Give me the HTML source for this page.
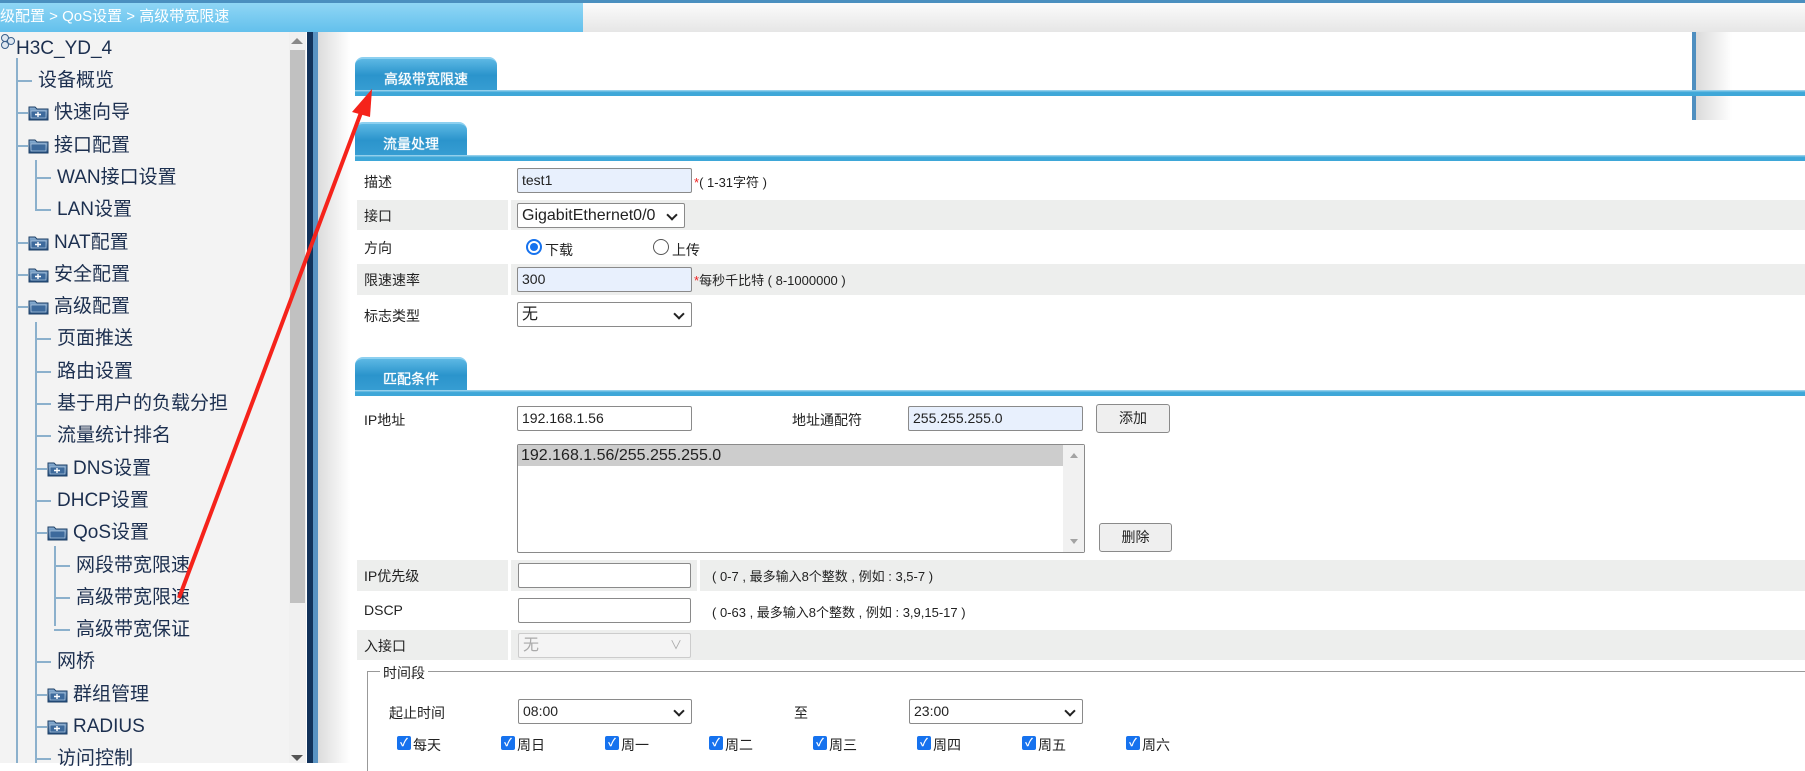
<!DOCTYPE html>
<html><head><meta charset="utf-8"><style>
*{margin:0;padding:0;box-sizing:border-box}
body{width:1805px;height:763px;overflow:hidden;background:#fff;font-family:"Liberation Sans","Noto Sans CJK SC",sans-serif;position:relative;color:#222}
.a{position:absolute}
.topline{left:0;top:0;width:1805px;height:3px;background:#4a8fbf}
.topbar{left:583px;top:3px;width:1222px;height:29px;background:linear-gradient(#fbfbfb,#e6e6e6)}
.crumb{left:0;top:0;width:583px;height:32px;background:linear-gradient(#8fd6f5,#63c0ec);border-top:3px solid #4a8fbf;color:#fff;font-size:15px;line-height:28px;padding-left:0}
.left{left:0;top:32px;width:289px;height:731px;background:#f3f3f3}
.sb{left:289px;top:32px;width:17px;height:731px;background:#f0f0f0}
.thumb{left:290px;top:50px;width:15px;height:553px;background:#c1c1c1}
.tree{font-size:19px;color:#1c2f4f;font-family:"Liberation Sans","Noto Sans CJK SC",sans-serif;white-space:nowrap;line-height:22px}
.vl{background:#8bb0cc;width:2px}
.hl{background:#8bb0cc;height:2px}
.ico{width:20px;height:15px}
.tab{height:38px;background:linear-gradient(#5cb8e4,#2b94cc 45%,#3aa0d4);border-radius:8px 8px 0 0;color:#fff;font-size:14px;text-align:center;line-height:40px;border-top:2px solid #8dd0f0;text-shadow:0 0 1px #fff}
.bl{height:6px;background:linear-gradient(#a9daf0,#3ea7d8 40%,#3ea7d8)}
.lbl{font-size:14px;color:#222}
.g{background:#edeeed}
.inp{height:25px;border:1px solid #8a8a8a;border-radius:2px;background:#fff;font-size:14px;padding-left:4px;line-height:23px;color:#222}
.blue{background:#e8f0fd}
.sel::after{content:"";position:absolute;right:8px;top:7px;width:6px;height:6px;border-right:2px solid #222;border-bottom:2px solid #222;transform:rotate(45deg)}
.btn{height:29px;border:1px solid #8a8a8a;border-radius:3px;background:#efefef;font-size:14px;text-align:center;line-height:27px}
.cb{width:14px;height:14px;background:#1672ee;border-radius:2px;color:#fff;font-size:11px;text-align:center;line-height:14px;font-weight:bold}
.cbt{font-size:14px}
</style></head><body>
<div class="a topline"></div>
<div class="a topbar"></div>
<div class="a crumb">级配置 &gt; QoS设置 &gt; 高级带宽限速</div>
<div class="a left"></div>
<div class="a sb"></div>
<div class="a thumb"></div>
<div class="a" style="left:291px;top:38px;width:0;height:0;border:6px solid transparent;border-bottom:6px solid #888;border-top:0"></div>
<div class="a" style="left:291px;top:755px;width:0;height:0;border:6px solid transparent;border-top:6px solid #555;border-bottom:0"></div>
<div class="a" style="left:307px;top:32px;width:6px;height:731px;background:#12325a"></div>
<div class="a" style="left:313px;top:32px;width:5px;height:731px;background:#5a93c2"></div>
<div class="a" style="left:318px;top:32px;width:32px;height:731px;background:linear-gradient(90deg,#dcdcdc,#fff)"></div>

<div class="tree">
<div class="a" style="left:0;top:34px;width:14px;height:16px"><svg width="16" height="18"><circle cx="5" cy="4" r="3.5" fill="#dfe7f0" stroke="#3a5f8a"/><circle cx="11" cy="7" r="3.5" fill="#dfe7f0" stroke="#3a5f8a"/><circle cx="5" cy="11" r="3.5" fill="#dfe7f0" stroke="#3a5f8a"/></svg></div>
<div class="a" style="left:16px;top:38px">H3C_YD_4</div>
<div class="a vl" style="left:16px;top:58px;height:705px"></div>
<div class="a vl" style="left:35px;top:322px;height:441px"></div>
<div class="a vl" style="left:35px;top:160px;height:50px"></div>
<div class="a vl" style="left:54px;top:546px;height:80px"></div>
</div>
<div id="tr" class="tree"></div>
<script>
var it=[["设备概览",1,0],["快速向导",1,1],["接口配置",1,2],["WAN接口设置",2,0],["LAN设置",2,0],["NAT配置",1,1],["安全配置",1,1],["高级配置",1,2],["页面推送",2,0],["路由设置",2,0],["基于用户的负载分担",2,0],["流量统计排名",2,0],["DNS设置",2,1],["DHCP设置",2,0],["QoS设置",2,2],["网段带宽限速",3,0],["高级带宽限速",3,0],["高级带宽保证",3,0],["网桥",2,0],["群组管理",2,1],["RADIUS",2,1],["访问控制",2,0]];
var fold='<svg width="21" height="16"><defs><linearGradient id="fg" x1="0" y1="0" x2="0" y2="1"><stop offset="0" stop-color="#8fb4d8"/><stop offset="1" stop-color="#1f4a7c"/></linearGradient></defs><path d="M1 2h6l2 2h11v11H1z" fill="url(#fg)" stroke="#1d3f66"/><rect x="3" y="6" width="15" height="7" fill="#3d6a9c" stroke="#c8dcef" stroke-width="0.6"/>PLUS</svg>';
var h="";
for(var i=0;i<it.length;i++){var y=81+i*32.3,t=it[i],vx=[0,16,35,54][t[1]];
 if(t[2]){h+='<div class="a hl" style="left:'+vx+'px;top:'+(y-1)+'px;width:12px"></div>';
  var ix=vx+12;h+='<div class="a ico" style="left:'+ix+'px;top:'+(y-8)+'px">'+fold.replace("PLUS",t[2]==1?'<path d="M7 9.5h6M10 7v5" stroke="#fff" stroke-width="1.4"/>':'')+'</div>';
  h+='<div class="a" style="left:'+(ix+26)+'px;top:'+(y-11)+'px">'+t[0]+'</div>';}
 else{h+='<div class="a hl" style="left:'+vx+'px;top:'+(y-1)+'px;width:16px"></div>';
  h+='<div class="a" style="left:'+(vx+22)+'px;top:'+(y-11)+'px">'+t[0]+'</div>';}
}
document.getElementById("tr").innerHTML=h;
</script>

<div class="a" style="left:1692px;top:32px;width:4px;height:88px;background:#4f8fc0"></div>
<div class="a" style="left:1696px;top:32px;width:36px;height:88px;background:linear-gradient(90deg,#dadada,#fff)"></div>

<div class="a tab" style="left:355px;top:57px;width:142px">高级带宽限速</div>
<div class="a bl" style="left:355px;top:90px;width:1450px"></div>
<div class="a" style="left:1692px;top:96px;width:4px;height:24px;background:#4f8fc0"></div>

<div class="a tab" style="left:355px;top:122px;width:112px">流量处理</div>
<div class="a bl" style="left:355px;top:155px;width:1450px"></div>

<div class="a lbl" style="left:364px;top:172px">描述</div>
<div class="a inp blue" style="left:517px;top:168px;width:175px">test1</div>
<div class="a lbl" style="left:694px;top:172px;font-size:13px"><span style="color:#e22">*</span>( 1-31字符 )</div>

<div class="a g" style="left:357px;top:200px;width:151px;height:30px"></div>
<div class="a g" style="left:511px;top:200px;width:1294px;height:30px"></div>
<div class="a lbl" style="left:364px;top:206px">接口</div>
<div class="a inp sel" style="left:517px;top:203px;width:168px;height:25px;font-size:16px">GigabitEthernet0/0</div>

<div class="a lbl" style="left:364px;top:238px">方向</div>
<div class="a" style="left:526px;top:239px;width:16px;height:16px;border-radius:50%;border:2px solid #1672ee;background:#fff"><div class="a" style="left:2px;top:2px;width:8px;height:8px;border-radius:50%;background:#1672ee"></div></div>
<div class="a lbl" style="left:545px;top:240px">下载</div>
<div class="a" style="left:653px;top:239px;width:16px;height:16px;border-radius:50%;border:1px solid #555;background:#fff"></div>
<div class="a lbl" style="left:672px;top:240px">上传</div>

<div class="a g" style="left:357px;top:264px;width:151px;height:31px"></div>
<div class="a g" style="left:511px;top:264px;width:1294px;height:31px"></div>
<div class="a lbl" style="left:364px;top:270px">限速速率</div>
<div class="a inp blue" style="left:517px;top:267px;width:175px">300</div>
<div class="a lbl" style="left:694px;top:270px;font-size:13px"><span style="color:#e22">*</span>每秒千比特 ( 8-1000000 )</div>

<div class="a lbl" style="left:364px;top:306px">标志类型</div>
<div class="a inp sel" style="left:517px;top:302px;width:175px;font-size:16px">无</div>

<div class="a tab" style="left:355px;top:357px;width:112px">匹配条件</div>
<div class="a bl" style="left:355px;top:390px;width:1450px"></div>

<div class="a lbl" style="left:364px;top:410px">IP地址</div>
<div class="a inp" style="left:517px;top:406px;width:175px">192.168.1.56</div>
<div class="a lbl" style="left:792px;top:410px">地址通配符</div>
<div class="a inp blue" style="left:908px;top:406px;width:175px">255.255.255.0</div>
<div class="a btn" style="left:1096px;top:404px;width:74px">添加</div>

<div class="a" style="left:517px;top:444px;width:568px;height:109px;border:1px solid #8a8a8a;border-radius:2px;background:#fff">
<div class="a" style="left:0;top:0;width:545px;height:21px;background:#cdcdcd;font-size:16px;padding-left:3px;line-height:21px">192.168.1.56/255.255.255.0</div>
<div class="a" style="right:0;top:0;width:21px;height:107px;background:#f1f1f1"></div>
<div class="a" style="right:6px;top:8px;border:4px solid transparent;border-bottom:5px solid #a3a3a3;border-top:0"></div>
<div class="a" style="right:6px;bottom:8px;border:4px solid transparent;border-top:5px solid #a3a3a3;border-bottom:0"></div>
</div>
<div class="a btn" style="left:1099px;top:523px;width:73px">删除</div>

<div class="a g" style="left:357px;top:560px;width:151px;height:31px"></div>
<div class="a g" style="left:511px;top:560px;width:186px;height:31px"></div>
<div class="a g" style="left:700px;top:560px;width:1105px;height:31px"></div>
<div class="a lbl" style="left:364px;top:566px">IP优先级</div>
<div class="a inp" style="left:518px;top:563px;width:173px"></div>
<div class="a lbl" style="left:712px;top:566px;font-size:13px">( 0-7 , 最多输入8个整数 , 例如 : 3,5-7 )</div>

<div class="a lbl" style="left:364px;top:602px">DSCP</div>
<div class="a inp" style="left:518px;top:598px;width:173px"></div>
<div class="a lbl" style="left:712px;top:602px;font-size:13px">( 0-63 , 最多输入8个整数 , 例如 : 3,9,15-17 )</div>

<div class="a g" style="left:357px;top:630px;width:151px;height:30px"></div>
<div class="a g" style="left:511px;top:630px;width:1294px;height:30px"></div>
<div class="a lbl" style="left:364px;top:636px">入接口</div>
<div class="a inp" style="left:518px;top:633px;width:173px;border-color:#ccc;background:#f4f4f4;color:#aaa;font-size:16px">无<span class="a" style="right:8px;top:0;color:#aaa;font-size:12px">∨</span></div>

<div class="a" style="left:367px;top:671px;width:1438px;height:100px;border:1px solid #999;border-right:0;border-bottom:0"></div>
<div class="a lbl" style="left:380px;top:663px;background:#fff;padding:0 3px">时间段</div>
<div class="a lbl" style="left:389px;top:703px">起止时间</div>
<div class="a inp sel" style="left:518px;top:699px;width:174px">08:00</div>
<div class="a lbl" style="left:794px;top:703px">至</div>
<div class="a inp sel" style="left:909px;top:699px;width:174px">23:00</div>

<div class="a cb" style="left:397px;top:736px">✓</div><div class="a cbt" style="left:413px;top:735px">每天</div>
<div class="a cb" style="left:501px;top:736px">✓</div><div class="a cbt" style="left:517px;top:735px">周日</div>
<div class="a cb" style="left:605px;top:736px">✓</div><div class="a cbt" style="left:621px;top:735px">周一</div>
<div class="a cb" style="left:709px;top:736px">✓</div><div class="a cbt" style="left:725px;top:735px">周二</div>
<div class="a cb" style="left:813px;top:736px">✓</div><div class="a cbt" style="left:829px;top:735px">周三</div>
<div class="a cb" style="left:917px;top:736px">✓</div><div class="a cbt" style="left:933px;top:735px">周四</div>
<div class="a cb" style="left:1022px;top:736px">✓</div><div class="a cbt" style="left:1038px;top:735px">周五</div>
<div class="a cb" style="left:1126px;top:736px">✓</div><div class="a cbt" style="left:1142px;top:735px">周六</div>

<svg class="a" style="left:0;top:0" width="1805" height="763">
<line x1="179" y1="598" x2="362" y2="110" stroke="#f5231b" stroke-width="4"/>
<polygon points="372,89 352,112 370,117" fill="#f5231b"/>
</svg>
</body></html>
